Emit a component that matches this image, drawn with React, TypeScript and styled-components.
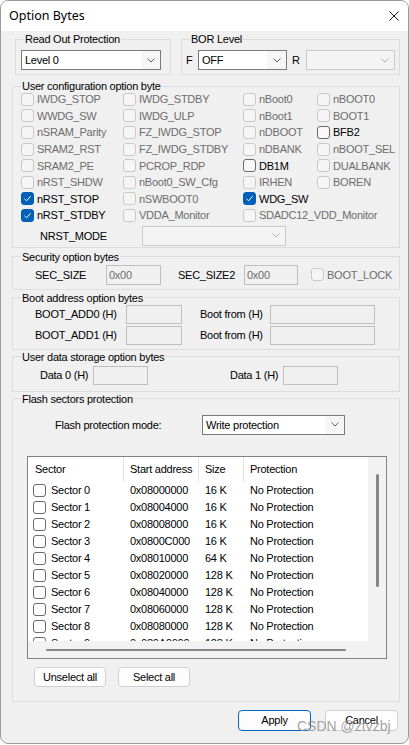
import React from 'react';
import styled, { createGlobalStyle } from 'styled-components';

const GlobalStyle = createGlobalStyle`
  html, body { margin: 0; padding: 0; background: #ffffff; }
  body { font-family: "Liberation Sans", Arial, sans-serif; }
  *, *::before, *::after { box-sizing: border-box; }
`;

const Window = styled.div`
  position: relative;
  width: 409px;
  height: 744px;
  border: 1px solid #9b9b9b;
  border-radius: 8px;
  overflow: hidden;
  background: #f0f0f0;
  display: flex;
  flex-direction: column;
  font-family: "Liberation Sans", Arial, sans-serif;
  font-size: 11px;
  letter-spacing: -0.25px;
  color: #000;
`;

const TitleBar = styled.div`
  height: 30px;
  flex: none;
  background: #ffffff;
  display: flex;
  align-items: center;
  justify-content: space-between;
  padding: 0 9px 1px 8px;
`;

const TitleText = styled.span`
  font-family: "Segoe UI", "Noto Sans", "Open Sans", sans-serif;
  font-size: 12.5px;
  letter-spacing: 0;
  color: #000;
`;

const Body = styled.div`
  flex: 1;
  display: flex;
  flex-direction: column;
  padding: 2px 8px 0 11px;
`;

const TopRow = styled.div`
  display: flex;
  align-items: flex-start;
  gap: 10px;
  margin-left: 3px;
`;

const Group = styled.fieldset<{ $pt?: number; $pb?: number; $mt?: number; $w?: number; $grow?: boolean }>`
  margin: ${p => p.$mt ?? 0}px 0 0 0;
  padding: ${p => p.$pt ?? 0}px 0 ${p => p.$pb ?? 0}px 0;
  border: 1px solid #dcdcdc;
  min-width: 0;
  ${p => (p.$w ? `width: ${p.$w}px; flex: none;` : '')}
  ${p => (p.$grow ? 'flex: 1;' : '')}
`;

const Legend = styled.legend`
  margin-left: 8px;
  padding: 0 1px;
  font-size: 11px;
  line-height: 12px;
  color: #000;
`;

const InlineRow = styled.div<{ $pl: number; $h?: number }>`
  display: flex;
  align-items: center;
  padding-left: ${p => p.$pl}px;
  height: ${p => p.$h ?? 20}px;
`;

const Label = styled.span<{ $w: number; $ml?: number }>`
  flex: none;
  width: ${p => p.$w}px;
  margin-left: ${p => p.$ml ?? 0}px;
  white-space: nowrap;
`;

const Combo = styled.div<{ $w: number; $disabled?: boolean }>`
  flex: none;
  width: ${p => p.$w}px;
  height: 20px;
  display: flex;
  align-items: stretch;
  border: 1px solid ${p => (p.$disabled ? '#cbcbcb' : '#7a7a7a')};
  background: ${p => (p.$disabled ? '#f4f4f4' : '#ffffff')};
`;

const ComboText = styled.span`
  flex: 1;
  display: flex;
  align-items: center;
  padding-left: 3px;
  white-space: nowrap;
  overflow: hidden;
`;

const ComboButton = styled.span<{ $disabled?: boolean }>`
  flex: none;
  width: 19px;
  display: flex;
  align-items: center;
  justify-content: center;
  background: ${p => (p.$disabled ? 'transparent' : '#f6f6f6')};
`;

const TextBox = styled.div<{ $w: number }>`
  flex: none;
  width: ${p => p.$w}px;
  height: 100%;
  display: flex;
  align-items: center;
  padding-left: 2px;
  border: 1px solid #bfbfbf;
  background: #f0f0f0;
  color: #6d6d6d;
`;

type CbState = 'disabled' | 'off' | 'on';

const Box = styled.span<{ $state: CbState; $white?: boolean }>`
  flex: none;
  width: 13px;
  height: 13px;
  border-radius: 3px;
  display: flex;
  align-items: center;
  justify-content: center;
  border: 1px solid
    ${p => (p.$state === 'on' ? '#005fb8' : p.$state === 'off' ? '#6a6a6a' : '#c9c9c9')};
  background: ${p =>
    p.$state === 'on' ? '#005fb8' : p.$white ? '#ffffff' : p.$state === 'off' ? '#f8f8f8' : '#f5f5f5'};
`;

const CheckItem = styled.div<{ $disabled?: boolean }>`
  display: flex;
  align-items: center;
  gap: 3px;
  height: 16.6px;
  white-space: nowrap;
  color: ${p => (p.$disabled ? '#6d6d6d' : '#000')};
`;

const ConfigGrid = styled.div`
  display: grid;
  grid-template-columns: 102px 120px 74px 1fr;
  grid-auto-rows: 16.6px;
  margin-top: -1px;
  padding-left: 8px;
`;

const StackRows = styled.div`
  display: flex;
  flex-direction: column;
  gap: 2px;
`;

const ListBox = styled.div`
  margin: 21px 0 0 14px;
  width: 360px;
  height: 203px;
  border: 1px solid #828282;
  display: grid;
  grid-template-columns: 1fr 18px;
  grid-template-rows: 1fr 17px;
  background: #f2f2f2;
`;

const ListContent = styled.div`
  background: #ffffff;
  overflow: hidden;
`;

const ListGridRow = styled.div<{ $h: number }>`
  display: grid;
  grid-template-columns: 95px 75px 45px 1fr;
  height: ${p => p.$h}px;
  align-items: center;
  white-space: nowrap;
`;

const HeaderCell = styled.div<{ $divider?: boolean }>`
  height: 100%;
  display: flex;
  align-items: center;
  padding-left: ${p => (p.$divider ? 6 : 7)}px;
  border-left: ${p => (p.$divider ? '1px solid #e5e5e5' : 'none')};
`;

const Cell = styled.div<{ $first?: boolean }>`
  display: flex;
  align-items: center;
  gap: 5px;
  padding-left: ${p => (p.$first ? 5 : 7)}px;
`;

const VTrack = styled.div`
  display: flex;
  flex-direction: column;
  padding: 17px 0 0 8px;
`;

const VThumb = styled.div`
  width: 3px;
  height: 113px;
  border-radius: 2px;
  background: #868686;
`;

const HTrack = styled.div`
  padding: 8px 0 0 18px;
`;

const HThumb = styled.div`
  width: 300px;
  height: 2px;
  border-radius: 1px;
  background: #868686;
`;

const ButtonRow = styled.div<{ $mt: number; $end?: boolean; $gap: number; $pl?: number; $pr?: number }>`
  display: flex;
  gap: ${p => p.$gap}px;
  margin-top: ${p => p.$mt}px;
  justify-content: ${p => (p.$end ? 'flex-end' : 'flex-start')};
  padding-left: ${p => p.$pl ?? 0}px;
  padding-right: ${p => p.$pr ?? 0}px;
`;

const PushButton = styled.button<{ $w: number; $h: number; $default?: boolean }>`
  width: ${p => p.$w}px;
  height: ${p => p.$h}px;
  padding: 0;
  border: 1px solid ${p => (p.$default ? '#0067c0' : '#d0d0d0')};
  border-radius: 4px;
  background: #fdfdfd;
  font: inherit;
  letter-spacing: inherit;
  color: #000;
`;

const Watermark = styled.div`
  position: absolute;
  left: 296px;
  top: 716px;
  font-family: "Liberation Sans", Arial, sans-serif;
  font-size: 14px;
  line-height: 18px;
  letter-spacing: 0;
  color: rgba(140, 140, 140, 0.8);
  pointer-events: none;
`;

const Chevron = ({ disabled }: { disabled?: boolean }) => (
  <svg width="8" height="5" viewBox="0 0 8 5">
    <path d="M0.5 0.5 L4 4 L7.5 0.5" fill="none" stroke={disabled ? '#b0b0b0' : '#606060'} strokeWidth="1" />
  </svg>
);

const CloseIcon = () => (
  <svg width="10" height="10" viewBox="0 0 10 10">
    <path d="M0.5 0.5 L9.5 9.5 M9.5 0.5 L0.5 9.5" stroke="#1a1a1a" strokeWidth="1" />
  </svg>
);

const CheckMark = () => (
  <svg width="11" height="11" viewBox="0 0 11 11">
    <path d="M2.5 5.8 L4.6 7.8 L8.6 3.2" fill="none" stroke="#ffffff" strokeWidth="1" />
  </svg>
);

const Select = ({ w, value, disabled }: { w: number; value?: string; disabled?: boolean }) => (
  <Combo $w={w} $disabled={disabled}>
    <ComboText>{value}</ComboText>
    <ComboButton $disabled={disabled}>
      <Chevron disabled={disabled} />
    </ComboButton>
  </Combo>
);

const Check = ({ state, white }: { state: CbState; white?: boolean }) => (
  <Box $state={state} $white={white}>{state === 'on' ? <CheckMark /> : null}</Box>
);

type Opt = [string, CbState] | null;

const configRows: Opt[][] = [
  [['IWDG_STOP', 'disabled'], ['IWDG_STDBY', 'disabled'], ['nBoot0', 'disabled'], ['nBOOT0', 'disabled']],
  [['WWDG_SW', 'disabled'], ['IWDG_ULP', 'disabled'], ['nBoot1', 'disabled'], ['BOOT1', 'disabled']],
  [['nSRAM_Parity', 'disabled'], ['FZ_IWDG_STOP', 'disabled'], ['nDBOOT', 'disabled'], ['BFB2', 'off']],
  [['SRAM2_RST', 'disabled'], ['FZ_IWDG_STDBY', 'disabled'], ['nDBANK', 'disabled'], ['nBOOT_SEL', 'disabled']],
  [['SRAM2_PE', 'disabled'], ['PCROP_RDP', 'disabled'], ['DB1M', 'off'], ['DUALBANK', 'disabled']],
  [['nRST_SHDW', 'disabled'], ['nBoot0_SW_Cfg', 'disabled'], ['IRHEN', 'disabled'], ['BOREN', 'disabled']],
  [['nRST_STOP', 'on'], ['nSWBOOT0', 'disabled'], ['WDG_SW', 'on'], null],
  [['nRST_STDBY', 'on'], ['VDDA_Monitor', 'disabled'], ['SDADC12_VDD_Monitor', 'disabled'], null],
];

const sectors: [string, string, string][] = [
  ['Sector 0', '0x08000000', '16 K'],
  ['Sector 1', '0x08004000', '16 K'],
  ['Sector 2', '0x08008000', '16 K'],
  ['Sector 3', '0x0800C000', '16 K'],
  ['Sector 4', '0x08010000', '64 K'],
  ['Sector 5', '0x08020000', '128 K'],
  ['Sector 6', '0x08040000', '128 K'],
  ['Sector 7', '0x08060000', '128 K'],
  ['Sector 8', '0x08080000', '128 K'],
  ['Sector 9', '0x080A0000', '128 K'],
];

export default function App() {
  return (
    <>
      <GlobalStyle />
      <Window>
        <TitleBar>
          <TitleText>Option Bytes</TitleText>
          <CloseIcon />
        </TitleBar>
        <Body>
          <TopRow>
            <Group $w={156} $pt={5} $pb={4}>
              <Legend>Read Out Protection</Legend>
              <InlineRow $pl={5}>
                <Select w={140} value="Level 0" />
              </InlineRow>
            </Group>
            <Group $grow $pt={5} $pb={4}>
              <Legend>BOR Level</Legend>
              <InlineRow $pl={4}>
                <Label $w={12}>F</Label>
                <Select w={89} value="OFF" />
                <Label $w={14} $ml={5}>R</Label>
                <Select w={89} disabled />
              </InlineRow>
            </Group>
          </TopRow>

          <Group $mt={5} $pb={1}>
            <Legend>User configuration option byte</Legend>
            <ConfigGrid>
              {configRows.flatMap((row, ri) =>
                row.map((opt, ci) =>
                  opt ? (
                    <CheckItem key={`${ri}-${ci}`} $disabled={opt[1] === 'disabled'}>
                      <Check state={opt[1]} />
                      <span>{opt[0]}</span>
                    </CheckItem>
                  ) : (
                    <span key={`${ri}-${ci}`} />
                  )
                )
              )}
            </ConfigGrid>
            <InlineRow $pl={27} style={{ marginTop: 2 }}>
              <Label $w={102}>NRST_MODE</Label>
              <Select w={144} disabled />
            </InlineRow>
          </Group>

          <Group $mt={3} $pt={2} $pb={4}>
            <Legend>Security option bytes</Legend>
            <InlineRow $pl={22}>
              <Label $w={71}>SEC_SIZE</Label>
              <TextBox $w={55}>0x00</TextBox>
              <Label $w={66} $ml={17}>SEC_SIZE2</Label>
              <TextBox $w={54}>0x00</TextBox>
              <CheckItem $disabled style={{ marginLeft: 13 }}>
                <Check state="disabled" />
                <span>BOOT_LOCK</span>
              </CheckItem>
            </InlineRow>
          </Group>

          <Group $mt={2} $pt={1} $pb={4}>
            <Legend>Boot address option bytes</Legend>
            <StackRows>
              <InlineRow $pl={22} $h={19}>
                <Label $w={91}>BOOT_ADD0 (H)</Label>
                <TextBox $w={56} />
                <Label $w={70} $ml={18}>Boot from (H)</Label>
                <TextBox $w={105} />
              </InlineRow>
              <InlineRow $pl={22} $h={19}>
                <Label $w={91}>BOOT_ADD1 (H)</Label>
                <TextBox $w={56} />
                <Label $w={70} $ml={18}>Boot from (H)</Label>
                <TextBox $w={105} />
              </InlineRow>
            </StackRows>
          </Group>

          <Group $mt={1} $pt={3} $pb={6}>
            <Legend>User data storage option bytes</Legend>
            <InlineRow $pl={27} $h={19}>
              <Label $w={53}>Data 0 (H)</Label>
              <TextBox $w={55} />
              <Label $w={53} $ml={82}>Data 1 (H)</Label>
              <TextBox $w={55} />
            </InlineRow>
          </Group>

          <Group $mt={1} $pt={10} $pb={14}>
            <Legend>Flash sectors protection</Legend>
            <InlineRow $pl={42}>
              <Label $w={147}>Flash protection mode:</Label>
              <Select w={143} value="Write protection" />
            </InlineRow>
            <ListBox>
              <ListContent>
                <ListGridRow $h={25}>
                  <HeaderCell>Sector</HeaderCell>
                  <HeaderCell $divider>Start address</HeaderCell>
                  <HeaderCell $divider>Size</HeaderCell>
                  <HeaderCell $divider>Protection</HeaderCell>
                </ListGridRow>
                {sectors.map(([name, addr, size]) => (
                  <ListGridRow key={name} $h={17}>
                    <Cell $first>
                      <Check state="off" white />
                      <span>{name}</span>
                    </Cell>
                    <Cell>{addr}</Cell>
                    <Cell>{size}</Cell>
                    <Cell>No Protection</Cell>
                  </ListGridRow>
                ))}
              </ListContent>
              <VTrack>
                <VThumb />
              </VTrack>
              <HTrack>
                <HThumb />
              </HTrack>
              <span />
            </ListBox>
            <ButtonRow $mt={8} $gap={12} $pl={21}>
              <PushButton $w={72} $h={20}>Unselect all</PushButton>
              <PushButton $w={72} $h={20}>Select all</PushButton>
            </ButtonRow>
          </Group>

          <ButtonRow $mt={8} $gap={14} $end $pr={2}>
            <PushButton $w={73} $h={21} $default>Apply</PushButton>
            <PushButton $w={73} $h={21}>Cancel</PushButton>
          </ButtonRow>
        </Body>
        <Watermark>CSDN @ztvzbj</Watermark>
      </Window>
    </>
  );
}
